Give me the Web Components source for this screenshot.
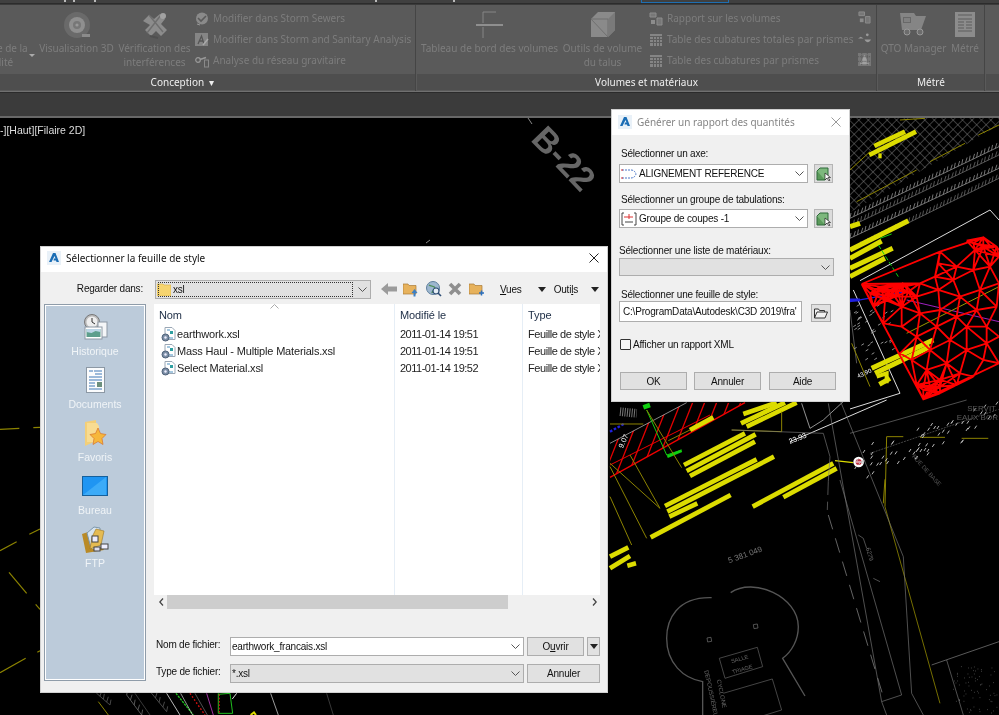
<!DOCTYPE html>
<html lang="fr">
<head>
<meta charset="UTF-8">
<title>Rapport des quantités</title>
<style>
  html,body{margin:0;height:100%;background:#000;overflow:hidden}
  body{position:relative;font-family:"Liberation Sans",Arial,sans-serif;filter:blur(.35px)}
  #feuille{left:40px;top:246px;width:568px;height:447px}
  #rapport{left:611px;top:109px;width:239px;height:293px}
  svg{display:block}
  .lab{display:block;line-height:12px;color:#111;white-space:nowrap}
  .d1{padding:13px 0 0 7px}
  .d1 .row{display:flex;align-items:flex-start}
  .d2{display:flex;flex-direction:column;flex:1;min-height:0}
  .d2 .top{display:flex;align-items:center;height:18px;margin-top:8px}
  .d2 .main{display:flex;margin:6px 0 0 3px;flex:1;min-height:0}
  .d2 .right{width:446px;margin-left:8px;display:flex;flex-direction:column}
  .tb{display:flex;align-items:center;color:#111}
  .form{display:grid;grid-template-columns:76px 294px 3px 57px 3px 13px;align-items:center;row-gap:8px;margin-top:28px}
  .form > span{padding:0 0 5px 2px}
  .form .wide{grid-column:4 / span 3;width:73px}
  u{text-decoration-thickness:1px}
</style>
</head>
<body>

<cad-ribbon>
  <ribbon-panel label="Conception &nbsp;▾" style="width:416px;--name-shift:50px">
    <ribbon-tool style="width:62px;margin-left:-34px">Analyse de la<br>qualité</ribbon-tool>
    <i style="width:0;height:0;margin:49px 2px 0 1px;border:3px solid transparent;border-top-color:#aaa;border-bottom:0"></i>
    <ribbon-tool style="width:73px;margin-left:3px">
      <svg slot="icon" width="28" height="28" viewBox="0 0 28 28"><circle cx="14" cy="14" r="13" fill="#6a6a6a"/><circle cx="14" cy="14" r="8" fill="#8f8f8f"/><circle cx="14" cy="14" r="4" fill="#777"/><circle cx="14" cy="14" r="1.6" fill="#999"/><rect x="19" y="23" width="8" height="3" fill="#8b8b8b"/></svg>
      Visualisation 3D</ribbon-tool>
    <ribbon-tool style="width:71px;margin-left:6px">
      <svg slot="icon" width="30" height="30" viewBox="0 0 30 30"><path d="M3 11 9 5l5 4 6-5 5 5-4 5 6 6-6 6-5-5-5 5-6-6 5-5z" fill="#8c8c8c"/><path d="M9 5l14 17M21 5 7 23" stroke="#6e6e6e" stroke-width="1.4"/><circle cx="23" cy="6" r="3" fill="#a2a2a2"/><path d="M10 26l8 2" stroke="#505050" stroke-width="2"/></svg>
      Vérification des<br>interférences</ribbon-tool>
    <div style="margin:3px 0 0 5px">
      <ribbon-row><svg slot="icon" width="14" height="14" viewBox="0 0 14 14"><circle cx="7" cy="6.5" r="6" fill="#8a8a8a"/><path d="M3 6l3 3 5-5" stroke="#5a5a5a" stroke-width="1.6" fill="none"/><path d="M2 12l3 1" stroke="#999"/></svg>Modifier dans Storm Sewers</ribbon-row>
      <ribbon-row><svg slot="icon" width="14" height="14" viewBox="0 0 14 14"><rect width="13" height="13" fill="#858585"/><path d="M3 11 6.500 3 9 11M4.500 8h4" stroke="#555" stroke-width="1.300" fill="none"/><path d="M8 12l5-6" stroke="#aaa" stroke-width="1.500"/></svg>Modifier dans Storm and Sanitary Analysis</ribbon-row>
      <ribbon-row><svg slot="icon" width="14" height="14" viewBox="0 0 14 14"><circle cx="3" cy="6" r="2.300" fill="none" stroke="#999" stroke-width="1.200"/><path d="M5 5.500l6-2" stroke="#999" stroke-width="1.600"/><rect x="9.500" y="6" width="4" height="7" fill="none" stroke="#8a8a8a"/></svg>Analyse du réseau gravitaire</ribbon-row>
    </div>
  </ribbon-panel>
  <ribbon-panel label="Volumes et matériaux" style="width:460px">
    <ribbon-tool style="width:135px;margin-left:5px">
      <svg slot="icon" width="28" height="28" viewBox="0 0 28 28"><path d="M7 12V1h13M0 14h27M7 16v11" stroke="#858585" stroke-width="1" fill="none"/><path d="M0 14h27" stroke="#8f8f8f" stroke-width="2"/></svg>
      Tableau de bord des volumes</ribbon-tool>
    <ribbon-tool style="width:79px;margin-left:6px">
      <svg slot="icon" width="26" height="27" viewBox="0 0 26 27"><path d="M1 8 8 1h17v18l-7 7H1z" fill="#8a8a8a"/><path d="M1 8h17v18" fill="none" stroke="#6f6f6f"/><path d="M18 8l7-7v18l-7 7z" fill="#7a7a7a"/><path d="M1 8l17 18" stroke="#707070"/></svg>
      Outils de volume<br>du talus</ribbon-tool>
    <div style="margin:3px 0 0 7px;width:204px">
      <ribbon-row><svg slot="icon" width="14" height="14" viewBox="0 0 14 14"><path d="M1 1h6v4H1zM8 6h5v7H8z" fill="#777" stroke="#8c8c8c"/><path d="M2 8h4v4H2z" fill="#8c8c8c"/></svg>Rapport sur les volumes</ribbon-row>
      <ribbon-row><svg slot="icon" width="14" height="14" viewBox="0 0 14 14"><path d="M1 1h12v12H1z" fill="#858585"/><path d="M1 3.500h12M1 6.500h12M1 9.500h12M4.500 3v10M7.500 3v10M10.500 3v10" stroke="#5d5d5d"/></svg>Table des cubatures totales par prismes</ribbon-row>
      <ribbon-row><svg slot="icon" width="14" height="14" viewBox="0 0 14 14"><path d="M1 1h12v12H1z" fill="#858585"/><path d="M1 3.500h12M1 6.500h12M1 9.500h12M4.500 3v10M7.500 3v10M10.500 3v10" stroke="#5d5d5d"/></svg>Table des cubatures par prismes</ribbon-row>
    </div>
    <div style="margin:6px 0 0 5px;display:flex;flex-direction:column;gap:8px">
      <svg width="13" height="13" viewBox="0 0 14 14"><path d="M1 1h6v4H1zM8 6h5v7H8z" fill="#777" stroke="#8c8c8c"/><path d="M2 8h4v4H2z" fill="#8c8c8c"/></svg>
      <svg width="13" height="13" viewBox="0 0 14 14"><path d="M0 7l3-2 3 2H0zM7 8c2 4 5 4 7 0z" fill="#999"/><circle cx="10" cy="3" r="1.500" fill="#999"/></svg>
      <svg width="13" height="13" viewBox="0 0 14 14"><rect width="14" height="14" fill="#777"/><path d="M7 2 12 12H2z" fill="#a0a0a0"/><path d="M0 4h14M0 9h14M4 0v14M10 0v14" stroke="#555" stroke-dasharray="1 1"/></svg>
    </div>
  </ribbon-panel>
  <ribbon-panel label="Métré" style="width:107px">
    <ribbon-tool style="width:63px;margin-left:4px">
      <svg slot="icon" width="27" height="26" viewBox="0 0 27 26"><path d="M0 1h14l2 3h10l-5 14H2z" fill="#858585"/><path d="M3 5h8v6H3z" fill="#686868"/><path d="M4 7h6M4 9h6" stroke="#999"/><circle cx="7" cy="20" r="3" fill="#6c6c6c" stroke="#999"/><circle cx="20" cy="20" r="3" fill="#6c6c6c" stroke="#999"/></svg>
      QTO Manager</ribbon-tool>
    <ribbon-tool style="width:28px;margin-left:6px">
      <svg slot="icon" width="20" height="25" viewBox="0 0 20 25"><rect width="20" height="25" fill="#8c8c8c"/><path d="M3 3h14M3 7h14M3 10h6M11 10h6M3 13h6M11 13h6M3 16h6M11 16h6M3 19h14" stroke="#5d5d5d"/></svg>
      Métré</ribbon-tool>
  </ribbon-panel>
  <ribbon-panel label="" style="width:40px"></ribbon-panel>
</cad-ribbon>

<cad-drawing></cad-drawing>

<win-dialog id="feuille" heading="Sélectionner la feuille de style">
  <div class="d2">
    <div class="top">
      <span class="lab" style="width:102px;text-align:right">Regarder dans:</span>
      <win-combo style="width:216px;margin-left:12px" flat focus>
        <svg slot="icon" width="14" height="13" viewBox="0 0 14 13"><path d="M0 1h6l1 1h7v11H0z" fill="#f6d46f" stroke="#d9ae45" stroke-width=".6"/></svg>xsl</win-combo>
      <div class="tb" style="margin-left:10px">
        <svg width="16" height="14" viewBox="0 0 16 14"><path d="M0 7 7 1v3.500h9v5H7V13z" fill="#9b9b9b"/></svg>
        <svg style="margin-left:6px" width="15" height="15" viewBox="0 0 15 15"><path d="M0 2h5l1 1.500h7V12H0z" fill="#e7b25c" stroke="#a97a35" stroke-width=".7"/><path d="M11.500 7 14.500 11h-2v3.500h-2V11h-2z" fill="#3d7fc4"/></svg>
        <svg style="margin-left:8px" width="16" height="16" viewBox="0 0 16 16"><circle cx="7" cy="7" r="6.500" fill="#9db7cf" stroke="#5f7f9d"/><path d="M3 4c2 2 5 0 6 3 1 2-3 2-3 5" stroke="#4f8f5a" stroke-width="1.400" fill="none"/><circle cx="10" cy="10" r="3" fill="#e6eef5" stroke="#2d4d75" stroke-width="1.200"/><path d="M12 12l3 3" stroke="#2d4d75" stroke-width="1.600"/></svg>
        <svg style="margin-left:6px" width="14" height="14" viewBox="0 0 14 14"><path d="M2 2l10 10M12 2 2 12" stroke="#8f8f8f" stroke-width="3.600"/></svg>
        <svg style="margin-left:7px" width="15" height="15" viewBox="0 0 15 15"><path d="M0 2h5l1 1.500h7V12H0z" fill="#e7b25c" stroke="#a97a35" stroke-width=".7"/><path d="M10 11h5M12.500 8.500v5" stroke="#2a6fbf" stroke-width="1.500"/></svg>
        <span style="margin-left:16px"><u>V</u>ues</span>
        <i style="margin-left:16px;border:4px solid transparent;border-top:5px solid #222;border-bottom:0"></i>
        <span style="margin-left:8px">Outi<u>l</u>s</span>
        <i style="margin-left:13px;border:4px solid transparent;border-top:5px solid #222;border-bottom:0"></i>
      </div>
    </div>
    <div class="main">
      <places-bar>
        <place-item>
          <svg slot="icon" width="28" height="27" viewBox="0 0 28 27"><circle cx="11" cy="8" r="7.500" fill="#bbb" stroke="#777"/><circle cx="11" cy="8" r="5.500" fill="#eee"/><path d="M11 4v4l3 2" stroke="#333" fill="none"/><rect x="17" y="8" width="9" height="15" fill="#f4f6f8" stroke="#8c98a4"/><rect x="4" y="13" width="17" height="12" fill="#fff" stroke="#8c98a4"/><rect x="5.500" y="15" width="14" height="8" fill="#5d9e8c"/><path d="M5.500 15h14v3l-5-1-4 2-5-1z" fill="#bcd5e6"/></svg>
          Historique</place-item>
        <place-item>
          <svg slot="icon" width="19" height="26" viewBox="0 0 19 26"><rect x=".5" y=".5" width="18" height="25" fill="#fbfcfd" stroke="#8c98a4"/><path d="M3 4h4M8 4h8M9 7h7M3 10h13M3 13h13M3 16h6M3 19h6M3 22h13" stroke="#3f78b7"/><rect x="11" y="15" width="5" height="5" fill="#6c8f7d"/></svg>
          Documents</place-item>
        <place-item>
          <svg slot="icon" width="24" height="27" viewBox="0 0 24 27"><path d="M2 2 13 0v21L2 26z" fill="#f3cf78"/><path d="M4 3h10l2 3v16H4z" fill="#f8dc92"/><path d="M15 8l2.500 5.500 5.500 1-4 4 1 6-5-3-5 3 1-6-4-4 5.500-1z" fill="#f6b73c" stroke="#d7712a" stroke-width=".7"/></svg>
          Favoris</place-item>
        <place-item>
          <svg slot="icon" width="26" height="20" viewBox="0 0 26 20"><rect x=".5" y=".5" width="25" height="19" fill="#1f95f2" stroke="#15609c"/><path d="M1 19 24 1v18z" fill="#3cabf8"/></svg>
          Bureau</place-item>
        <place-item>
          <svg slot="icon" width="28" height="27" viewBox="0 0 28 27"><path d="M1 8l6-2 4 17 10-2 2 3-18 3z" fill="#b98a26"/><path d="M6 7 13 1l6 1v9L10 22z" fill="#d7e4ef" stroke="#7c97ad"/><path d="M15 3l8 2-3 14-11 4 2-12z" fill="#e5bb53" stroke="#9b7420" stroke-width=".6"/><rect x="11" y="10" width="6" height="6" fill="#eef" stroke="#444"/><rect x="20" y="18" width="7" height="5" fill="#eef" stroke="#444"/><rect x="13" y="21" width="6" height="4" fill="#dde" stroke="#444"/></svg>
          FTP</place-item>
      </places-bar>
      <div class="right">
        <file-list>
          <file-row name="Nom" date="Modifié le" kind="Type" head></file-row>
          <file-row name="earthwork.xsl" date="2011-01-14 19:51" kind="Feuille de style XSL"></file-row>
          <file-row name="Mass Haul - Multiple Materials.xsl" date="2011-01-14 19:51" kind="Feuille de style XSL"></file-row>
          <file-row name="Select Material.xsl" date="2011-01-14 19:52" kind="Feuille de style XSL"></file-row>
        </file-list>
        <h-scroll></h-scroll>
        <div class="form">
          <span>Nom de fichier:</span>
          <win-combo>earthwork_francais.xsl</win-combo>
          <span></span>
          <win-btn>O<u>u</u>vrir</win-btn>
          <span></span>
          <win-btn><i style="display:block;border:4px solid transparent;border-top:5px solid #222;border-bottom:0"></i></win-btn>
          <span>Type de fichier:</span>
          <win-combo flat>*.xsl</win-combo>
          <span></span>
          <win-btn class="wide">Annuler</win-btn>
        </div>
      </div>
    </div>
  </div>
</win-dialog>

<win-dialog id="rapport" heading="Générer un rapport des quantités" inactive>
  <div class="d1">
    <span class="lab" style="margin-left:2px">Sélectionner un axe:</span>
    <div class="row" style="margin-top:4px">
      <win-combo style="width:189px">
        <svg slot="icon" width="16" height="12" viewBox="0 0 16 12"><path d="M1 2h9M1 10h9M10 2c4 0 5 4 5 4s-1 4-5 4" fill="none" stroke="#4a76c8" stroke-width="1" stroke-dasharray="2 1"/><path d="M1 1v2M1 9v2" stroke="#d33"/></svg>ALIGNEMENT REFERENCE</win-combo>
      <pick-btn style="margin-left:6px"></pick-btn>
    </div>
    <span class="lab" style="margin:11px 0 0 2px">Sélectionner un groupe de tabulations:</span>
    <div class="row" style="margin-top:3px">
      <win-combo style="width:189px">
        <svg slot="icon" width="16" height="14" viewBox="0 0 16 14"><path d="M3 1H1v12h2M13 1h2v12h-2" fill="none" stroke="#444"/><path d="M4 10h8" stroke="#444"/><path d="M3 5h9" stroke="#d33"/><path d="M8 2v5" stroke="#d33"/></svg>Groupe de coupes -1</win-combo>
      <pick-btn style="margin-left:6px"></pick-btn>
    </div>
    <span class="lab" style="margin-top:17px">Sélectionner une liste de matériaux:</span>
    <win-combo flat style="width:215px;height:18px;margin-top:1px"></win-combo>
    <span class="lab" style="margin:13px 0 0 2px">Sélectionner une feuille de style:</span>
    <div class="row">
      <win-input style="width:183px">C:\ProgramData\Autodesk\C3D 2019\fra'</win-input>
      <win-btn style="width:20px;height:18px;margin:3px 0 0 9px">
        <svg width="14" height="11" viewBox="0 0 14 11"><path d="M.5 10V1h4l1 1.500h5V4M.5 10 3 4h10.500L11 10z" fill="#f2f2f2" stroke="#333"/></svg></win-btn>
    </div>
    <win-check style="margin:17px 0 0 1px">Afficher un rapport XML</win-check>
    <div class="row" style="margin:22px 0 0 1px">
      <win-btn style="width:67px;height:18px">OK</win-btn>
      <win-btn style="width:67px;height:18px;margin-left:7px">Annuler</win-btn>
      <win-btn style="width:67px;height:18px;margin-left:8px">Aide</win-btn>
    </div>
  </div>
</win-dialog>

<script>
  // small base class: every element just gets its shadow markup from a static string
  class Shadowed extends HTMLElement {
    constructor() {
      super();
      this.attachShadow({ mode: 'open' });
      this.shadowRoot.innerHTML = this.constructor.markup;
    }
  }

  class CadRibbon extends Shadowed {
    static markup = `
      <style>
        :host{display:block;height:118px;background:#3b3b3b;overflow:hidden;position:relative}
        .tabs{height:3px;background:#404040;border-bottom:1px solid #2c2c2c;position:relative;overflow:hidden}
        .tabs b{position:absolute;top:0;height:2px;width:2px;background:#bbb}
        .tabs em{position:absolute;top:-2px;left:641px;width:86px;height:3px;border:1px solid #1f6fb2}
        .panels{display:flex;height:86px;margin-top:1px;background:#5a5a5a;border-bottom:1px solid #707070;box-sizing:content-box}
        .gap{height:23px;background:#3b3b3b;border-top:1px solid #2b2b2b}
        .line{height:3px;background:#686868}
      </style>
      <div class="tabs"><b style="left:64px"></b><b style="left:73px"></b><b style="left:94px"></b><b style="left:375px"></b><b style="left:453px"></b><em></em></div>
      <div class="panels"><slot></slot></div>
      <div class="gap"></div>
      <div class="line"></div>`;
  }

  class RibbonPanel extends Shadowed {
    static markup = `
      <style>
        :host{display:flex;flex:none;flex-direction:column;box-sizing:border-box;border-right:1px solid #454545;margin-right:1px;font:10px/13.5px "Noto Sans","Open Sans",sans-serif;color:#7d7d7d}
        .body{display:flex;height:68px;flex:none}
        .name{height:16px;background:#4e4e4e;color:#eee;line-height:16px;text-align:center;white-space:nowrap;margin-top:1px;padding-right:var(--name-shift,0)}
      </style>
      <div class="body"><slot></slot></div>
      <div class="name"></div>`;
    connectedCallback() {
      this.shadowRoot.querySelector('.name').textContent = this.getAttribute('label');
    }
  }

  class RibbonTool extends Shadowed {
    static markup = `
      <style>
        :host{display:flex;flex:none;flex-direction:column;align-items:center;text-align:center;white-space:nowrap}
        .ic{height:35px;margin-top:2px;display:flex;align-items:center;justify-content:center}
      </style>
      <div class="ic"><slot name="icon"></slot></div>
      <div><slot></slot></div>`;
  }

  class RibbonRow extends Shadowed {
    static markup = `
      <style>
        :host{display:flex;align-items:center;height:21px;gap:4px;white-space:nowrap}
        ::slotted(svg){flex:none}
      </style>
      <slot name="icon"></slot><slot></slot>`;
  }

  class WinDialog extends Shadowed {
    static markup = `
      <style>
        :host{position:absolute;display:flex;flex-direction:column;box-sizing:border-box;background:#f0f0f0;border:1px solid #d0d0d0;font:10px "Liberation Sans",Arial,sans-serif;letter-spacing:-.2px;color:#111}
        .bar{display:flex;align-items:center;flex:none;height:25px;box-sizing:border-box;padding:0 6px 3px;background:#fff}
        .logo{flex:none;width:14px;height:14px;background:#e9f1f8;display:flex;align-items:center;justify-content:center}
        .t{font:10px "Noto Sans",sans-serif;letter-spacing:0;margin-left:5px;flex:1;white-space:nowrap}
        :host([inactive]) .bar{padding-bottom:1px}
        :host([inactive]) .t{color:#858585}
        .x{width:10px;height:10px;margin-right:2px}
        :host([inactive]) .x path{stroke:#9a9a9a}
      </style>
      <div class="bar">
        <div class="logo"><svg width="12" height="12" viewBox="0 0 12 12"><path d="M1 10 5 1h2.500L11 10H8.500L8 8.500H5.500L6 6.500h1.500L6.500 4 3.500 10z" fill="#1a6db5"/></svg></div>
        <div class="t"></div>
        <svg class="x" viewBox="0 0 10 10"><path d="M.5.5l9 9M9.500.5l-9 9" stroke="#222" fill="none"/></svg>
      </div>
      <slot></slot>`;
    connectedCallback() {
      this.shadowRoot.querySelector('.t').textContent = this.getAttribute('heading');
    }
  }

  class WinCombo extends Shadowed {
    static markup = `
      <style>
        :host{display:flex;align-items:center;box-sizing:border-box;height:19px;background:#fff;border:1px solid #adadad;color:#111;white-space:nowrap;padding-left:1px}
        :host([flat]){background:#e1e1e1}
        .in{flex:1;display:flex;align-items:center;gap:2px;height:100%;box-sizing:border-box;min-width:0}
        :host([focus]) .in{outline:1px dotted #333;outline-offset:-2px}
        svg{flex:none;margin:0 3px 0 4px}
      </style>
      <div class="in"><slot name="icon"></slot><slot></slot></div>
      <svg width="9" height="5" viewBox="0 0 9 5"><path d="M.5.5l4 4 4-4" fill="none" stroke="#555"/></svg>`;
  }

  class WinBtn extends Shadowed {
    static markup = `
      <style>
        :host{display:flex;align-items:center;justify-content:center;box-sizing:border-box;height:19px;background:#e1e1e1;border:1px solid #adadad;color:#111}
      </style>
      <slot></slot>`;
  }

  class PickBtn extends Shadowed {
    static markup = `
      <style>
        :host{display:flex;align-items:center;justify-content:center;box-sizing:border-box;width:19px;height:19px;background:#dcdcdc;border:1px solid #b5b5b5}
      </style>
      <svg width="15" height="14" viewBox="0 0 15 14"><path d="M1 4h8v9H1z" fill="#5a9a5a" stroke="#2e6a3a"/><path d="M1 4 4 1h8v8l-3 4" fill="#7db87d" stroke="#2e6a3a"/><path d="M9 6v7l2-2 2 3 1-.8-2-2.700h2.500z" fill="#fff" stroke="#222" stroke-width=".7"/></svg>`;
  }

  class WinInput extends Shadowed {
    static markup = `
      <style>
        :host{display:block;box-sizing:border-box;height:21px;background:#fff;border:1px solid #adadad;line-height:19px;padding-left:3px;white-space:nowrap;overflow:hidden;color:#111}
      </style>
      <slot></slot>`;
  }

  class WinCheck extends Shadowed {
    static markup = `
      <style>
        :host{display:flex;align-items:center;color:#111;white-space:nowrap;gap:2px}
        i{width:11px;height:11px;box-sizing:border-box;border:1px solid #333;background:#f6f6f6;border-radius:1px}
      </style>
      <i></i><slot></slot>`;
  }

  class PlacesBar extends Shadowed {
    static markup = `
      <style>
        :host{display:flex;flex-direction:column;flex:none;box-sizing:border-box;width:102px;height:377px;background:#bccbda;border:1px solid #8f9ca9;outline:1px solid #fff;outline-offset:-2px;padding-top:5px}
      </style>
      <slot></slot>`;
  }

  class PlaceItem extends Shadowed {
    static markup = `
      <style>
        :host{display:flex;flex-direction:column;align-items:center;height:53px;color:#f0f4f7;font-size:10.5px;letter-spacing:0}
        .ic{height:34px;display:flex;align-items:center;justify-content:center}
        .n{line-height:12px;margin-top:1px}
      </style>
      <div class="ic"><slot name="icon"></slot></div>
      <div class="n"><slot></slot></div>`;
  }

  class FileList extends Shadowed {
    static markup = `
      <style>
        :host{display:block;position:relative;flex:none;height:291px;box-sizing:border-box;padding-top:1px;
          background:linear-gradient(#e6eef6,#e6eef6) 240px 0/1px 100% no-repeat,linear-gradient(#e6eef6,#e6eef6) 368px 0/1px 100% no-repeat,#fff}
        svg{position:absolute;left:116px;top:0}
      </style>
      <svg width="9" height="5" viewBox="0 0 9 5"><path d="M.5 4.500l4-4 4 4" fill="none" stroke="#aaa"/></svg>
      <slot></slot>`;
  }

  class FileRow extends Shadowed {
    static markup = `
      <style>
        :host{display:grid;grid-template-columns:240px 128px 78px;height:17px;font:11px/17px "Liberation Sans",Arial,sans-serif;color:#222;white-space:nowrap}
        :host([head]){height:20px;line-height:20px;margin-bottom:1px;color:#1c2c44}
        div{overflow:hidden;display:flex;align-items:center}
        .a{padding-left:5px;letter-spacing:-.17px}
        .b{padding-left:6px;letter-spacing:-.5px}
        .c{padding-left:6px;letter-spacing:-.42px}
        :host([head]) .b,:host([head]) .c{letter-spacing:-.1px}
        svg{flex:none;margin:0 1px 0 2px}
        :host([head]) svg{display:none}
      </style>
      <div class="a"><svg width="15" height="15" viewBox="0 0 15 15"><path d="M4 .5h7l3 3v9H4z" fill="#fff" stroke="#9aa7b5"/><path d="M6 3h3M6 11h6" stroke="#4a90c0"/><rect x="9" y="4" width="3" height="3" fill="#2d9fa0"/><circle cx="4.500" cy="10.500" r="3.500" fill="#7b8ea5" stroke="#4e6079"/><circle cx="4.500" cy="10.500" r="1.200" fill="#eef"/></svg><span></span></div>
      <div class="b"></div>
      <div class="c"></div>`;
    connectedCallback() {
      const r = this.shadowRoot;
      r.querySelector('.a span').textContent = this.getAttribute('name');
      r.querySelector('.b').textContent = this.getAttribute('date');
      r.querySelector('.c').textContent = this.getAttribute('kind');
    }
  }

  class HScroll extends Shadowed {
    static markup = `
      <style>
        :host{display:flex;align-items:center;flex:none;height:14px;background:#f0f0f0}
        svg{flex:none;margin:0 3px 0 5px}
        .t{flex:1;height:14px}
        .t i{display:block;width:341px;height:14px;background:#cdcdcd}
      </style>
      <svg width="5" height="8" viewBox="0 0 5 8"><path d="M4 .5.800 4 4 7.500" fill="none" stroke="#444" stroke-width="1.300"/></svg>
      <div class="t"><i></i></div>
      <svg width="5" height="8" viewBox="0 0 5 8"><path d="M1 .5 4.200 4 1 7.500" fill="none" stroke="#444" stroke-width="1.300"/></svg>`;
  }

  // the drawing behind the dialogs. groups keep the scale of the crops the coordinates were read from
  class CadDrawing extends Shadowed {
    static markup = `
      <style>
        :host{display:block;height:597px;background:#000;overflow:hidden;font-family:"Liberation Sans",Arial,sans-serif}
        svg{display:block}
        .note{position:absolute;left:0;top:123px;color:#ddd;font-size:10.5px;white-space:nowrap;line-height:14px}
      </style>
      <div class="note">-][Haut][Filaire 2D]</div>
      <svg id="s" width="999" height="597" viewBox="0 118 999 597" fill="none"></svg>`;

    connectedCallback() {
      this.shadowRoot.getElementById('s').innerHTML = this.art();
    }

    line(p, color, w, extra) {
      return `<path d="M${p.join(' ')}" stroke="${color}" stroke-width="${w}" ${extra || ''}/>`;
    }

    // a long line with small ticks, used for the fence rows
    ticks(x1, y1, x2, y2, n, color) {
      let d = `M${x1} ${y1}L${x2} ${y2}`;
      for (let i = 0; i <= n; i++) {
        const x = x1 + (x2 - x1) * i / n, y = y1 + (y2 - y1) * i / n;
        d += `M${x} ${y}l${i % 2 ? 5 : 3} -16`;
      }
      return `<path d="${d}" stroke="${color}" stroke-width="2.500"/>`;
    }

    art() {
      const Y = '#dcdc00', O = '#8d8400', G = '#777', W = '#ddd';
      let out = '';

      // big label
      out += `<text transform="translate(581,193) rotate(46)" text-anchor="end" font-size="34" font-weight="bold" fill="#666" font-family="Liberation Sans">B-22</text>`;
      out += `<path d="M528 118l4 6M426 243l4-3" stroke="#888"/>`;

      // left margin
      let g = '';
      [[[0,88],[58,85]],[[100,83],[120,82]],[[0,452],[50,425]],[[88,403],[120,387]],[[27,517],[80,580]],[[107,613],[120,628]],[[0,818],[77,775]],[[112,757],[120,752]]]
        .forEach(l => g += this.line(l, O, 3.5));
      out += `<g transform="translate(0,400) scale(.3333)">${g}</g>`;

      // under the file dialog
      g = '';
      g += this.ticks(290,25,330,60,4,'#555') + this.ticks(380,30,425,90,4,'#666') + this.ticks(455,25,500,80,4,'#555');
      g += this.line([[295,50],[325,90]], O, 3) + this.line([[405,25],[450,90]], '#555', 2);
      g += this.line([[500,25],[540,90]], W, 2.5) + this.line([[528,25],[580,90]], '#1fc41f', 4, 'stroke-dasharray="7 3"');
      g += this.line([[542,25],[578,90]], W, 2) + this.line([[570,25],[615,90]], '#e01010', 4, 'stroke-dasharray="5 6"');
      g += this.line([[585,25],[622,90]], G, 2) + this.line([[620,25],[640,90]], '#a030a0', 3);
      g += this.line([[655,25],[655,85],[698,85],[690,25],[655,28]], '#20c020', 3) + this.line([[658,28],[658,85]], '#e01010', 3, 'stroke-dasharray="5 5"');
      g += this.line([[697,42],[710,25]], W, 3) + this.line([[812,25],[835,90]], '#bbb', 2.5) + this.line([[980,25],[1000,90]], '#555', 2);
      g += this.line([[752,90],[762,82],[768,90]], Y, 6);
      out += `<g transform="translate(0,685) scale(.3333)">${g}</g>`;

      // lower right crop
      g = '';
      g += `<clipPath id="band"><path d="M0 232 405 8 230 8 0 130z"/></clipPath>`;
      let hatch = '';
      for (let x = -60; x < 460; x += 36) hatch += `M${x} 240L${x + 95} 0`;
      g += `<path d="${hatch}" clip-path="url(#band)" stroke="#e00000" stroke-width="4"/>`;
      g += this.line([[0,232],[405,8]], '#f00000', 4) + this.line([[0,195],[300,45]], '#f00000', 3) + this.line([[0,130],[230,8]], '#ccc', 2);
      g += this.line([[30,35],[80,40]], '#777', 26, 'stroke-dasharray="3 4"');
      g += this.line([[0,95],[45,70]], '#2020e0', 7, 'stroke-dasharray="8 5"');
      g += this.line([[110,30],[170,165],[215,150]], '#10d010', 3) + this.line([[172,170],[215,152]], '#10d010', 8) + this.line([[100,22],[120,15]], '#10d010', 14);
      [[[400,42],[500,8]],[[393,70],[525,8]],[[410,80],[560,8]],[[240,90],[310,52]],[[222,195],[405,100]],[[230,213],[437,103]],[[240,228],[435,125]],
       [[165,318],[440,178]],[[172,335],[492,170]],[[178,350],[262,310]],[[122,412],[362,285]],[[428,320],[670,190]],[[520,292],[680,205]],[[0,470],[55,442]],[[0,505],[60,468]],[[52,497],[78,490]]]
        .forEach(l => g += this.line(l, Y, 14));
      [[[175,122],[240,90]],[[365,90],[515,95],[515,35]],[[60,165],[150,325]],[[150,325],[0,190]],[[215,203],[110,30]],[[110,415],[0,200]],[[65,435],[0,290]],[[830,110],[880,110]],[[830,110],[825,320]],[[825,238],[820,310]],[[1055,115],[1135,115]],[[930,112],[1005,112]],[[0,72],[100,72]]]
        .forEach(l => g += this.line(l, O, 3));
      g += this.line([[675,182],[730,188]], Y, 3.5);
      g += this.line([[825,320],[990,910]], O, 2.5);
      g += this.line([[540,125],[600,100],[830,0]], W, 3) + this.line([[575,10],[600,85],[640,60],[705,0]], W, 2);
      g += this.line([[365,90],[640,100],[660,170],[655,245]], G, 2);
      g += this.line([[655,345],[820,890]], G, 2.5, 'stroke-dasharray="45 28"') + this.line([[655,245],[652,330]], G, 2, 'stroke-dasharray="40 20"');
      g += this.line([[655,10],[815,905],[875,885],[690,240]], G, 2) + this.line([[690,0],[880,470],[905,880],[940,945]], G, 2);
      g += this.line([[815,905],[830,945]], G, 2);
      g += this.line([[720,100],[1070,0]], G, 2) + this.line([[780,160],[1160,30]], '#666', 2, 'stroke-dasharray="6 3"');
      g += `<circle cx="746" cy="186" r="16" fill="#fff"/><circle cx="746" cy="186" r="9" fill="#c03040"/><path d="M738 186h16" stroke="#fff" stroke-width="3"/>`;
      // scatter of little survey marks
      let seed = 7;
      const rnd = () => (seed = (seed * 9301 + 49297) % 233280) / 233280;
      let marks = '';
      for (let i = 0; i < 70; i++) {
        const t = rnd(), x = 720 + t * 440 + rnd() * 30, y = 200 - t * 150 + (rnd() - .5) * 90;
        marks += `M${x.toFixed(0)} ${y.toFixed(0)}l6 -9`;
      }
      g += `<path d="${marks}" stroke="#bbb" stroke-width="3"/>`;
      g += this.line([[965,795],[1167,725]], '#888', 2) + this.line([[1010,780],[1060,945]], '#777', 2);
      let dots = '';
      for (let i = 0; i < 70; i++) dots += `M${(1030 + rnd() * 135).toFixed(0)} ${(800 + rnd() * 140).toFixed(0)}h2`;
      g += `<path d="${dots}" stroke="#888" stroke-width="2"/>`;
      // building outline
      g += `<path d="M305 593C200 590 170 660 170 715 170 790 220 835 278 845V945M362 578C430 530 565 590 565 680 565 720 545 755 518 775L585 888" stroke="#555" stroke-width="4"/>`;
      g += `<path d="M291 714l12-2 2 12-12 2zM430 674l12-2 2 12-12 2z" stroke="#777" stroke-width="2"/>`;
      g += `<path d="M328 775 442 742 458 800 345 835zM340 880 487 837 515 930 370 975" stroke="#666" stroke-width="2"/>`;
      g += this.line([[745,405],[760,415],[770,445]], G, 2) + this.line([[790,535],[810,545]], G, 2);
      const txt = (x, y, r, s, c, t) => `<text transform="translate(${x},${y}) rotate(${r})" font-size="${s}" fill="${c}" font-family="Liberation Sans">${t}</text>`;
      g += txt(358,490,-20,24,'#777','5 381 049') + txt(365,790,-16,17,'#666','SALLE') + txt(368,822,-16,17,'#666','TRIAGE');
      g += txt(320,840,78,18,'#666','CYCLONE') + txt(283,812,78,18,'#666','DEPOUSSIÉREUR') + txt(768,445,74,18,'#777','6279');
      g += txt(1072,34,0,24,'#5a5a5a','SERVIT') + txt(1040,60,0,24,'#5a5a5a','EAUX BOR') + txt(540,132,-22,22,'#fff','23.93');
      g += txt(38,146,-65,22,'#eee','9.07') + txt(905,170,48,18,'#555','RUE DE BASE');
      out += `<g transform="translate(610,400) scale(.3333)">${g}</g>`;

      // upper right crop
      g = '';
      g += `<pattern id="lat" width="20" height="20" patternUnits="userSpaceOnUse" patternTransform="rotate(45)"><path d="M0 0H20M0 0V20" stroke="#777" stroke-width="3"/></pattern>`;
      g += `<path d="M0 25H477V45L0 325z" fill="url(#lat)"/>`;
      [[[30,180],[90,125]],[[50,275],[230,180]],[[270,155],[375,100]],[[415,75],[477,45]],[[180,30],[255,25]]].forEach(l => g += this.line(l, O, 3));
      [[[103,108],[195,65]],[[88,135],[228,65]]].forEach(l => g += this.line(l, Y, 14));
      g += this.line([[120,145],[120,130]], Y, 10);
      g += this.ticks(30,325,477,110,40,'#8a8a8a') + this.ticks(30,385,477,175,40,'#8a8a8a') + this.ticks(40,345,477,135,40,'#666') + this.ticks(60,410,477,205,40,'#666');
      g += this.line([[60,512],[450,300],[477,330]], W, 3) + this.line([[40,540],[180,850],[30,897]], W, 3);
      g += this.line([[30,600],[50,760]], '#555', 3) + this.line([[35,700],[90,830]], O, 3);
      [[[30,350],[60,340]],[[30,420],[205,332]],[[30,445],[125,393]],[[30,475],[158,415]],[[30,500],[135,445]]].forEach(l => g += this.line(l, Y, 15));
      g += this.line([[115,405],[175,500]], '#10d010', 3, 'stroke-dasharray="14 6"') + this.line([[120,385],[155,372]], '#10d010', 3);
      g += this.line([[30,575],[200,545]], '#2020e0', 4) + this.line([[30,570],[60,570]], '#2020e0', 9);
      g += this.line([[200,570],[477,635]], '#a020c0', 3) + this.line([[200,670],[477,530]], '#9a9a00', 3);
      [[[95,775],[280,690]],[[105,790],[270,710]],[[118,823],[150,805]]].forEach(l => g += this.line(l, Y, 15));
      g += this.line([[110,800],[140,790],[140,820]], Y, 12);
      g += txt(55,805,-25,18,'#fff','43.90');
      for (let i = 0; i < 40; i++) g += `<path d="M${(40+rnd()*120).toFixed(0)} ${(560+rnd()*200).toFixed(0)}l8 -5" stroke="#aaa" stroke-width="2.500"/>`;
      // triangulated surface
      const pts = [[65,522],[90,550],[100,590],[130,640],[180,730],[230,825],[250,868],[300,850],[350,825],[400,800],[477,760],[300,425],[380,392],[430,382],[470,410],[477,440],[405,420],[350,470],[295,460],[285,500],[240,520],[190,520],[165,560],[185,590],[230,560],[295,540],[340,510],[400,480],[450,470],[477,520],[420,540],[360,560],[300,600],[240,610],[185,650],[230,680],[290,650],[350,620],[410,600],[470,590],[440,650],[380,650],[330,690],[270,720],[215,750],[260,780],[320,760],[380,720],[440,700],[477,680],[430,750],[360,790],[300,810],[150,540],[135,570],[120,530],[170,530],[205,545],[270,830],[300,830],[250,840],[400,400],[430,410]];
      let mesh = 'M65 522 300 425 430 382 470 410 477 420M477 760 250 868 65 522';
      pts.forEach((a, i) => pts.forEach((b, j) => {
        if (j > i && Math.hypot(a[0] - b[0], a[1] - b[1]) < 80) mesh += `M${a[0]} ${a[1]}L${b[0]} ${b[1]}`;
      }));
      [[190,520],[165,560],[240,520],[185,590]].forEach(p => mesh += `M65 522L${p[0]} ${p[1]}M90 550L${p[0]} ${p[1]}`);
      g += `<path d="${mesh}" stroke="#ff0000" stroke-width="5.500"/>`;
      out += `<g transform="translate(840,110) scale(.3333)">${g}</g>`;
      return out;
    }
  }

  customElements.define('cad-ribbon', CadRibbon);
  customElements.define('ribbon-panel', RibbonPanel);
  customElements.define('ribbon-tool', RibbonTool);
  customElements.define('ribbon-row', RibbonRow);
  customElements.define('cad-drawing', CadDrawing);
  customElements.define('win-dialog', WinDialog);
  customElements.define('win-combo', WinCombo);
  customElements.define('win-btn', WinBtn);
  customElements.define('pick-btn', PickBtn);
  customElements.define('win-input', WinInput);
  customElements.define('win-check', WinCheck);
  customElements.define('places-bar', PlacesBar);
  customElements.define('place-item', PlaceItem);
  customElements.define('file-list', FileList);
  customElements.define('file-row', FileRow);
  customElements.define('h-scroll', HScroll);
</script>
</body>
</html>
